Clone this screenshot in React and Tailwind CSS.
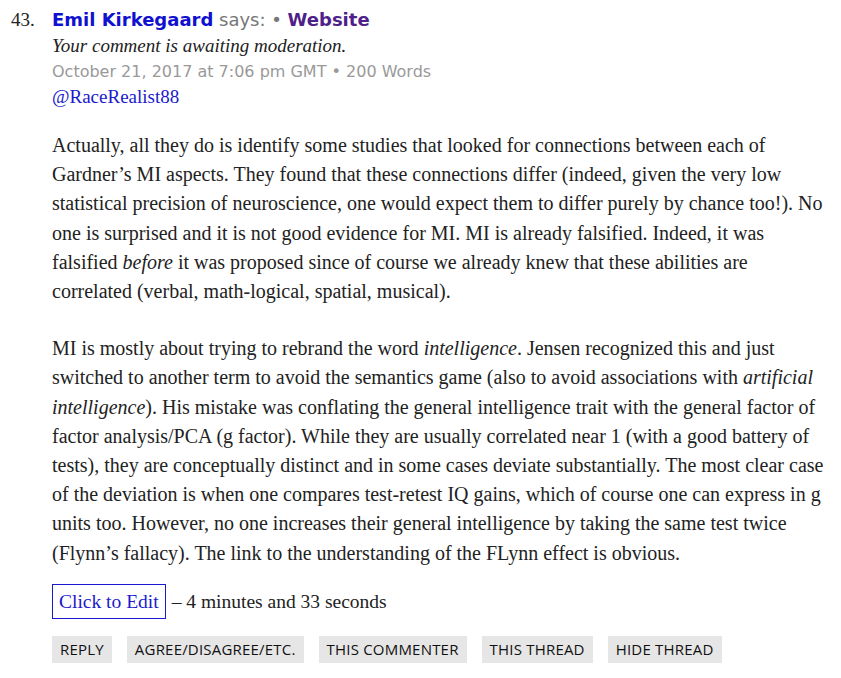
import React from "react";

const buttons = ["Reply", "Agree/Disagree/Etc.", "This Commenter", "This Thread", "Hide Thread"];

function App() {
  return (
    <div className="bg-white min-h-screen font-['Liberation_Serif',serif] text-[#222]">
      <div className="flex pt-[7px] pl-[11px] pr-[15px]">
        <div className="w-[41px] shrink-0 text-[19px] leading-[26px]">43.</div>
        <div className="flex-1">
          <div className="font-['DejaVu_Sans',sans-serif] text-[18px] leading-[26px]">
            <a className="font-bold text-[#1010d0]">Emil Kirkegaard</a>
            <span className="text-[#777]"> says: • </span>
            <a className="font-bold text-[#4f1f8a]">Website</a>
          </div>
          <div className="italic text-[19px] leading-[26px]">Your comment is awaiting moderation.</div>
          <div className="font-['DejaVu_Sans',sans-serif] text-[16px] leading-[25px] text-[#999]">
            October 21, 2017 at 7:06 pm GMT • 200 Words
          </div>
          <div className="text-[19px] leading-[26px] text-[#1a1acc]">@RaceRealist88</div>

          <div className="mt-[21px] text-[20px] leading-[29.2px] text-[#222]">
            <p>
              Actually, all they do is identify some studies that looked for connections between each of Gardner’s MI aspects. They found that these connections differ (indeed, given the very low statistical precision of neuroscience, one would expect them to differ purely by chance too!). No one is surprised and it is not good evidence for MI. MI is already falsified. Indeed, it was falsified <i>before</i> it was proposed since of course we already knew that these abilities are correlated (verbal, math-logical, spatial, musical).
            </p>
            <p className="mt-[28px]">
              MI is mostly about trying to rebrand the word <i>intelligence</i>. Jensen recognized this and just switched to another term to avoid the semantics game (also to avoid associations with <i>artificial intelligence</i>). His mistake was conflating the general intelligence trait with the general factor of factor analysis/PCA (g factor). While they are usually correlated near 1 (with a good battery of tests), they are conceptually distinct and in some cases deviate substantially. The most clear case of the deviation is when one compares test-retest IQ gains, which of course one can express in g units too. However, no one increases their general intelligence by taking the same test twice (Flynn’s fallacy). The link to the understanding of the FLynn effect is obvious.
            </p>
          </div>

          <div className="mt-[16px] flex items-center text-[19.5px]">
            <span className="border border-[#1a1acc] text-[#1a1acc] px-[6px] h-[35px] flex items-center">Click to Edit</span>
            <span className="ml-[6px]">– 4 minutes and 33 seconds</span>
          </div>

          <div className="mt-[17px] flex gap-[15px] font-['Open_Sans',sans-serif] text-[15px] tracking-[0.2px] uppercase">
            {buttons.map((b) => (
              <span key={b} className="bg-[#e6e6e6] text-[#111] px-[8px] h-[27px] flex items-center">{b}</span>
            ))}
          </div>
        </div>
      </div>
    </div>
  );
}

export default App;
